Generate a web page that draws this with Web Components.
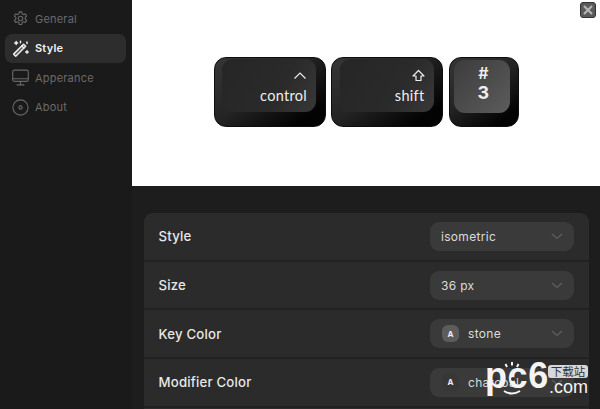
<!DOCTYPE html>
<html>
<head>
<meta charset="utf-8">
<title>Keys</title>
<style>
  html, body { margin: 0; height: 100%; background: #1c1c1c; overflow: hidden; }
  body { font-family: Inter, "Noto Sans", sans-serif; }
</style>
</head>
<body>
<app-shell>
  <side-bar slot="side">
    <nav-item icon="gear">General</nav-item>
    <nav-item icon="wand" active>Style</nav-item>
    <nav-item icon="monitor">Apperance</nav-item>
    <nav-item icon="disc">About</nav-item>
  </side-bar>
  <key-preview slot="preview">
    <key-cap wide top="caret" label="control"></key-cap>
    <key-cap wide top="shift" label="shift"></key-cap>
    <key-cap top="#" label="3"></key-cap>
  </key-preview>
  <settings-card slot="settings">
    <setting-row label="Style"><select-box>isometric</select-box></setting-row>
    <setting-row label="Size"><select-box>36 px</select-box></setting-row>
    <setting-row label="Key Color"><select-box swatch="#5c5c5c">stone</select-box></setting-row>
    <setting-row label="Modifier Color"><select-box swatch="#373737">charcoal</select-box></setting-row>
    <setting-row label=""></setting-row>
  </settings-card>
</app-shell>
<water-mark></water-mark>

<script>
const ICONS = {
  gear: `<path d="M9.600 2.500h2.800l.5 2.300 1.600.9 2.200-.8 1.400 2.400-1.700 1.600v1.900l1.700 1.600-1.400 2.400-2.200-.8-1.600.9-.5 2.300H9.600l-.5-2.300-1.600-.9-2.200.8-1.400-2.400 1.700-1.600V8.900L3.900 7.300l1.400-2.400 2.200.8 1.600-.9z" transform="translate(0 .8)"/><circle cx="11" cy="11" r="2.600"/>`,
  wand: `<path d="M3 17.500 14.500 6l2.500 2.500L5.500 20z" stroke-width="1.700" fill="#eee" fill-opacity=".2"/><path d="M12.500 8l2.500 2.500" stroke-width="1.700"/><path d="M6 3v3.400M4.300 4.700h3.400M18.500 13.500v3M17 15h3M11 2.500v1.800M18.500 3.500v1.800" stroke-width="1.700"/>`,
  monitor: `<rect x="2" y="2.500" width="18" height="13" rx="2"/><path d="M2 12.500h18M11 15.500v4M7 19.500h8"/>`,
  disc: `<circle cx="11" cy="11" r="8.800"/><circle cx="11" cy="11" r="1.900"/>`
};

class AppShell extends HTMLElement {
  constructor() {
    super();
    this.attachShadow({ mode: 'open' }).innerHTML = `
      <style>
        :host { display: grid; grid-template-columns: 132px 1fr; width: 600px; height: 409px; overflow: hidden; }
        #main { display: flex; flex-direction: column; min-width: 0; height: 409px; background: #1d1d1d; }
      </style>
      <slot name="side"></slot>
      <div id="main">
        <slot name="preview"></slot>
        <slot name="settings"></slot>
      </div>`;
  }
}

class SideBar extends HTMLElement {
  constructor() {
    super();
    this.attachShadow({ mode: 'open' }).innerHTML = `
      <style>
        :host { display: flex; flex-direction: column; padding: 4px 6px 0 5px; background: #1a1a1a; box-sizing: border-box; }
      </style>
      <slot></slot>`;
  }
}

class NavItem extends HTMLElement {
  connectedCallback() {
    if(this.shadowRoot) return;
    let active = this.hasAttribute('active');
    this.attachShadow({ mode: 'open' }).innerHTML = `
      <style>
        :host { display: flex; align-items: center; gap: 5.500px; height: 29.500px; padding-left: 5.500px; border-radius: 7px;
          font-size: 11px; letter-spacing: .2px; font-weight: ${active ? 600 : 400};
          color: ${active ? '#f2f2f2' : '#6a6a6a'}; background: ${active ? '#2d2d2d' : 'transparent'}; }
        svg { width: 19px; height: 19px; fill: none; stroke: ${active ? '#eee' : '#686868'}; stroke-width: 1.300; stroke-linejoin: round; stroke-linecap: round; flex: none; }
      </style>
      <svg viewBox="0 0 22 22">${ICONS[this.getAttribute('icon')]}</svg>
      <slot></slot>`;
  }
}

class KeyPreview extends HTMLElement {
  constructor() {
    super();
    this.attachShadow({ mode: 'open' }).innerHTML = `
      <style>
        :host { display: flex; position: relative; justify-content: center; gap: 5.500px; height: 186px; padding-top: 57px; box-sizing: border-box; background: #fff; flex: none; }
        #close { position: absolute; top: 2px; right: 4px; width: 16px; height: 16px; border-radius: 3px; background: #5a5a5a; border: 1px solid #333; box-sizing: border-box; }
        #close svg { display: block; width: 14px; height: 14px; stroke: #b5b5b5; stroke-width: 2.200; fill: none; }
      </style>
      <slot></slot>
      <div id="close"><svg viewBox="0 0 14 14"><path d="M3 3l8 8M11 3l-8 8"/></svg></div>`;
  }
}

class KeyCap extends HTMLElement {
  connectedCallback() {
    if(this.shadowRoot) return;
    let wide = this.hasAttribute('wide');
    let top = this.getAttribute('top');
    let label = this.getAttribute('label');
    let glyph = top;
    if(top === 'caret') glyph = `<svg viewBox="0 0 14 9" width="14" height="9"><path d="M1.500 7.500 7 2l5.500 5.500" fill="none" stroke="#eee" stroke-width="1.200"/></svg>`;
    if(top === 'shift') glyph = `<svg viewBox="0 0 13 13" width="13" height="13"><path d="M6.500 1.500 12 7H9v4.500H4V7H1z" fill="none" stroke="#eee" stroke-width="1.200" stroke-linejoin="round"/></svg>`;
    this.attachShadow({ mode: 'open' }).innerHTML = `
      <style>
        :host { display: block; position: relative; box-sizing: border-box; width: ${wide ? 112 : 70}px; height: 70px; border-radius: 12px;
          border: 1.500px solid #0d0d0d; background: linear-gradient(145deg, #363636 0%, #242424 45%, #030303 85%); color: #eee; }
        #cap { display: flex; flex-direction: column; box-sizing: border-box; height: 53px; border-radius: 11px;
          margin: ${wide ? '.5px 8.500px 0 7.500px' : '1.500px 7.500px 0 4.500px'};
          padding: ${wide ? '9px 9px 0 0' : '4px 0 0 3px'}; align-items: ${wide ? 'flex-end' : 'center'};
          background: ${wide ? 'linear-gradient(120deg, #262626, #2a2a2a 60%, #383838)' : 'linear-gradient(135deg, #3c3c3c, #5c5c5c)'}; }
        #top { height: ${wide ? 16 : 18}px; font-size: ${wide ? 13 : 16}px; line-height: 18px; font-weight: 600; display: flex; align-items: center; }
        #label { font-size: ${wide ? 14.500 : 18}px; line-height: ${wide ? 18 : 22}px; font-weight: ${wide ? 400 : 700}; margin-top: ${wide ? 3 : 0}px; font-family: ${wide ? 'Lato, Inter, sans-serif' : 'Inter, sans-serif'}; letter-spacing: .3px; }
      </style>
      <div id="cap"><div id="top">${glyph}</div><div id="label">${label}</div></div>`;
  }
}

class SettingsCard extends HTMLElement {
  constructor() {
    super();
    this.attachShadow({ mode: 'open' }).innerHTML = `
      <style>
        :host { display: flex; flex-direction: column; gap: 2px; margin: 27px 11px 0 12px; border-radius: 9px 9px 0 0; overflow: hidden; background: #222; }
      </style>
      <slot></slot>`;
  }
}

class SettingRow extends HTMLElement {
  connectedCallback() {
    if(this.shadowRoot) return;
    this.attachShadow({ mode: 'open' }).innerHTML = `
      <style>
        :host { display: flex; flex: none; align-items: center; justify-content: space-between; height: 46.700px; padding: 0 15px 0 14.500px; background: #2b2b2b; color: #e8e8e8; font-size: 13.200px; font-weight: 500; letter-spacing: .2px; }
      </style>
      <span>${this.getAttribute('label')}</span>
      <slot></slot>`;
  }
}

class SelectBox extends HTMLElement {
  connectedCallback() {
    if(this.shadowRoot) return;
    let swatch = this.getAttribute('swatch');
    this.attachShadow({ mode: 'open' }).innerHTML = `
      <style>
        :host { display: flex; align-items: center; box-sizing: border-box; width: 144px; height: 29px; padding: 0 11px; border-radius: 9px; background: #3a3a3a; color: #dcdcdc; font-size: 12px; font-weight: 400; letter-spacing: .3px; }
        #sw { display: flex; align-items: center; justify-content: center; width: 17px; height: 17px; margin-right: 9px; margin-left: 1px; border-radius: 6px; font-size: 8px; font-weight: 700; color: #eee; letter-spacing: 0; }
        svg { margin-left: auto; width: 12px; height: 7px; fill: none; stroke: #5e5e5e; stroke-width: 1.300; }
      </style>
      ${swatch ? `<span id="sw" style="background:${swatch}">A</span>` : ''}
      <slot></slot>
      <svg viewBox="0 0 12 7"><path d="M1 1l5 4.500L11 1"/></svg>`;
  }
}

class WaterMark extends HTMLElement {
  constructor() {
    super();
    this.attachShadow({ mode: 'open' }).innerHTML = `
      <style>
        :host { position: absolute; left: 486px; top: 358px; width: 114px; height: 51px; color: #f4f4f4; font-family: "Liberation Sans", sans-serif; display: block; }
        #logo { position: absolute; left: -1px; top: -2px; font-size: 36px; line-height: 40px; font-weight: 700; letter-spacing: .6px; }
        svg { position: absolute; left: 0; top: 0; width: 64px; height: 40px; fill: none; }
        #badge { position: absolute; left: 62px; top: 7px; width: 40px; height: 13px; background: #d8d8d8; color: #333; border-radius: 3px; font: 11.500px/13px "Noto Sans CJK SC", sans-serif; text-align: center; }
        #com { position: absolute; left: 63px; top: 21px; font-size: 18px; line-height: 16px; }
      </style>
      <div id="logo">pc6</div>
      <svg viewBox="0 0 64 40">
        <path d="M21 9l-1.500-3M26 7.500V4M31 9l1.500-3" stroke="#f4f4f4" stroke-width="2"/>
        <path d="M18 33q8 5 16 0" stroke="#f4f4f4" stroke-width="2"/>
        <circle cx="9" cy="21" r="2" fill="#333"/>
        <circle cx="27" cy="21" r="2" fill="#333"/>
      </svg>
      <div id="badge">下载站</div>
      <div id="com">.com</div>`;
  }
}

customElements.define('app-shell', AppShell);
customElements.define('side-bar', SideBar);
customElements.define('nav-item', NavItem);
customElements.define('key-preview', KeyPreview);
customElements.define('key-cap', KeyCap);
customElements.define('settings-card', SettingsCard);
customElements.define('setting-row', SettingRow);
customElements.define('select-box', SelectBox);
customElements.define('water-mark', WaterMark);
</script>
</body>
</html>
